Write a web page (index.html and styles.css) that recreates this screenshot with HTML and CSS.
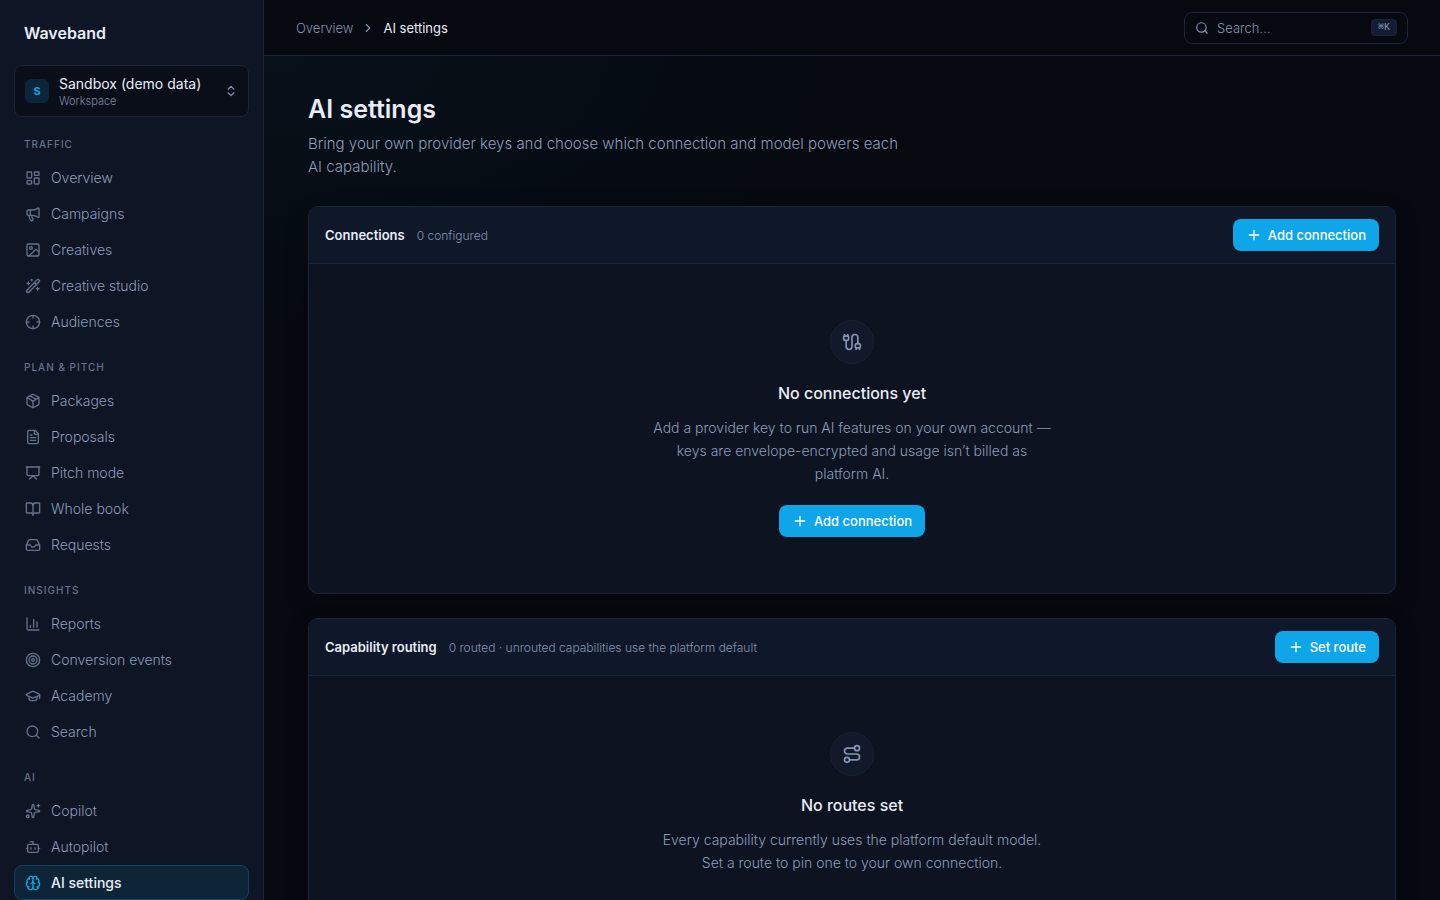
FILE: index.html
```html
<!DOCTYPE html>
<html lang="en">
<head>
    <meta charset="utf-8">
    <meta name="viewport" content="width=device-width, initial-scale=1">
    <title>AI settings - Waveband</title>
    <link rel="stylesheet" href="styles.css">
</head>
<body>
    <!-- icons -->
    <svg class="sprite" aria-hidden="true">
        <symbol id="i-dashboard" viewBox="0 0 24 24"><rect width="7" height="9" x="3" y="3" rx="1"/><rect width="7" height="5" x="14" y="3" rx="1"/><rect width="7" height="9" x="14" y="12" rx="1"/><rect width="7" height="5" x="3" y="16" rx="1"/></symbol>
        <symbol id="i-megaphone" viewBox="0 0 24 24"><path d="M11 6a13 13 0 0 0 8.4-2.8A1 1 0 0 1 21 4v12a1 1 0 0 1-1.6.8A13 13 0 0 0 11 14H5a2 2 0 0 1-2-2V8a2 2 0 0 1 2-2z"/><path d="M6 14a12 12 0 0 0 2.4 7.2 2 2 0 0 0 3.2-2.4A8 8 0 0 1 10 14"/><path d="M8 6v8"/></symbol>
        <symbol id="i-image" viewBox="0 0 24 24"><rect width="18" height="18" x="3" y="3" rx="2"/><circle cx="9" cy="9" r="2"/><path d="m21 15-3.086-3.086a2 2 0 0 0-2.828 0L6 21"/></symbol>
        <symbol id="i-wand" viewBox="0 0 24 24"><path d="m21.64 3.64-1.28-1.28a1.21 1.21 0 0 0-1.72 0L2.36 18.64a1.21 1.21 0 0 0 0 1.72l1.28 1.28a1.2 1.2 0 0 0 1.72 0L21.64 5.36a1.2 1.2 0 0 0 0-1.72"/><path d="m14 7 3 3M5 6v4M19 14v4M10 2v2M7 8H3M21 16h-4M11 3H9"/></symbol>
        <symbol id="i-crosshair" viewBox="0 0 24 24"><circle cx="12" cy="12" r="10"/><path d="M22 12h-4M6 12H2M12 6V2M12 22v-4"/></symbol>
        <symbol id="i-package" viewBox="0 0 24 24"><path d="M11 21.73a2 2 0 0 0 2 0l7-4A2 2 0 0 0 21 16V8a2 2 0 0 0-1-1.73l-7-4a2 2 0 0 0-2 0l-7 4A2 2 0 0 0 3 8v8a2 2 0 0 0 1 1.73z"/><path d="M12 22V12"/><path d="m3.3 7 7.703 4.734a2 2 0 0 0 1.994 0L20.7 7"/><path d="m7.5 4.27 9 5.15"/></symbol>
        <symbol id="i-file" viewBox="0 0 24 24"><path d="M15 2H6a2 2 0 0 0-2 2v16a2 2 0 0 0 2 2h12a2 2 0 0 0 2-2V7z"/><path d="M14 2v4a2 2 0 0 0 2 2h4"/><path d="M10 9H8M16 13H8M16 17H8"/></symbol>
        <symbol id="i-presentation" viewBox="0 0 24 24"><path d="M2 3h20"/><path d="M21 3v11a2 2 0 0 1-2 2H5a2 2 0 0 1-2-2V3"/><path d="m7 21 5-5 5 5"/></symbol>
        <symbol id="i-book" viewBox="0 0 24 24"><path d="M12 7v14"/><path d="M3 18a1 1 0 0 1-1-1V4a1 1 0 0 1 1-1h5a4 4 0 0 1 4 4 4 4 0 0 1 4-4h5a1 1 0 0 1 1 1v13a1 1 0 0 1-1 1h-6a3 3 0 0 0-3 3 3 3 0 0 0-3-3z"/></symbol>
        <symbol id="i-inbox" viewBox="0 0 24 24"><path d="M22 12h-6l-2 3h-4l-2-3H2"/><path d="M5.45 5.11 2 12v6a2 2 0 0 0 2 2h16a2 2 0 0 0 2-2v-6l-3.45-6.89A2 2 0 0 0 16.76 4H7.24a2 2 0 0 0-1.79 1.11z"/></symbol>
        <symbol id="i-chart" viewBox="0 0 24 24"><path d="M3 3v16a2 2 0 0 0 2 2h16"/><path d="M18 17V9M13 17V5M8 17v-3"/></symbol>
        <symbol id="i-target" viewBox="0 0 24 24"><circle cx="12" cy="12" r="10"/><circle cx="12" cy="12" r="6"/><circle cx="12" cy="12" r="2"/></symbol>
        <symbol id="i-cap" viewBox="0 0 24 24"><path d="M21.42 10.922a1 1 0 0 0-.019-1.838L12.83 5.18a2 2 0 0 0-1.66 0L2.6 9.08a1 1 0 0 0 0 1.832l8.57 3.908a2 2 0 0 0 1.66 0z"/><path d="M22 10v6"/><path d="M6 12.5V16a6 3 0 0 0 12 0v-3.5"/></symbol>
        <symbol id="i-search" viewBox="0 0 24 24"><circle cx="11" cy="11" r="8"/><path d="m21 21-4.34-4.34"/></symbol>
        <symbol id="i-sparkles" viewBox="0 0 24 24"><path d="M11.017 2.814a1 1 0 0 1 1.966 0l1.051 5.558a2 2 0 0 0 1.594 1.594l5.558 1.051a1 1 0 0 1 0 1.966l-5.558 1.051a2 2 0 0 0-1.594 1.594l-1.051 5.558a1 1 0 0 1-1.966 0l-1.051-5.558a2 2 0 0 0-1.594-1.594l-5.558-1.051a1 1 0 0 1 0-1.966l5.558-1.051a2 2 0 0 0 1.594-1.594z"/><path d="M20 2v4M22 4h-4"/><circle cx="4" cy="20" r="2"/></symbol>
        <symbol id="i-bot" viewBox="0 0 24 24"><path d="M12 8V4H8"/><rect width="16" height="12" x="4" y="8" rx="2"/><path d="M2 14h2M20 14h2M15 13v2M9 13v2"/></symbol>
        <symbol id="i-brain" viewBox="0 0 24 24"><path d="M12 18V5"/><path d="M15 13a4.17 4.17 0 0 1-3-4 4.17 4.17 0 0 1-3 4"/><path d="M17.598 6.5A3 3 0 1 0 12 5a3 3 0 1 0-5.598 1.5"/><path d="M17.997 5.125a4 4 0 0 1 2.526 5.77"/><path d="M18 18a4 4 0 0 0 2-7.464"/><path d="M19.967 17.483A4 4 0 1 1 12 18a4 4 0 1 1-7.967-.517"/><path d="M6 18a4 4 0 0 1-2-7.464"/><path d="M6.003 5.125a4 4 0 0 0-2.526 5.77"/></symbol>
        <symbol id="i-cable" viewBox="0 0 24 24"><path d="M17 19a1 1 0 0 1-1-1v-2a2 2 0 0 1 2-2h2a2 2 0 0 1 2 2v2a1 1 0 0 1-1 1z"/><path d="M17 21v-2"/><path d="M19 14V6.5a1 1 0 0 0-7 0v11a1 1 0 0 1-7 0V10"/><path d="M21 21v-2M3 5V3"/><path d="M4 10a2 2 0 0 1-2-2V6a1 1 0 0 1 1-1h4a1 1 0 0 1 1 1v2a2 2 0 0 1-2 2z"/><path d="M7 5V3"/></symbol>
        <symbol id="i-route" viewBox="0 0 24 24"><circle cx="6" cy="19" r="3"/><path d="M9 19h8.5a3.5 3.5 0 0 0 0-7h-11a3.5 3.5 0 0 1 0-7H15"/><circle cx="18" cy="5" r="3"/></symbol>
        <symbol id="i-updown" viewBox="0 0 24 24"><path d="m7 15 5 5 5-5M7 9l5-5 5 5"/></symbol>
        <symbol id="i-right" viewBox="0 0 24 24"><path d="m9 18 6-6-6-6"/></symbol>
        <symbol id="i-plus" viewBox="0 0 24 24"><path d="M5 12h14M12 5v14"/></symbol>
    </svg>

    <div class="app">
        <aside class="sidebar">
            <div class="brand">Waveband</div>

            <button class="workspace" type="button">
                <span class="workspace-badge">S</span>
                <span class="workspace-text">
                    <span class="workspace-name">Sandbox (demo data)</span>
                    <span class="workspace-type">Workspace</span>
                </span>
                <svg class="icon icon-sm"><use href="#i-updown"/></svg>
            </button>

            <nav class="nav">
                <div class="nav-group">
                    <h2 class="nav-label">Traffic</h2>
                    <a class="nav-item" href="#"><svg class="icon"><use href="#i-dashboard"/></svg>Overview</a>
                    <a class="nav-item" href="#"><svg class="icon"><use href="#i-megaphone"/></svg>Campaigns</a>
                    <a class="nav-item" href="#"><svg class="icon"><use href="#i-image"/></svg>Creatives</a>
                    <a class="nav-item" href="#"><svg class="icon"><use href="#i-wand"/></svg>Creative studio</a>
                    <a class="nav-item" href="#"><svg class="icon"><use href="#i-crosshair"/></svg>Audiences</a>
                </div>

                <div class="nav-group">
                    <h2 class="nav-label">Plan &amp; pitch</h2>
                    <a class="nav-item" href="#"><svg class="icon"><use href="#i-package"/></svg>Packages</a>
                    <a class="nav-item" href="#"><svg class="icon"><use href="#i-file"/></svg>Proposals</a>
                    <a class="nav-item" href="#"><svg class="icon"><use href="#i-presentation"/></svg>Pitch mode</a>
                    <a class="nav-item" href="#"><svg class="icon"><use href="#i-book"/></svg>Whole book</a>
                    <a class="nav-item" href="#"><svg class="icon"><use href="#i-inbox"/></svg>Requests</a>
                </div>

                <div class="nav-group">
                    <h2 class="nav-label">Insights</h2>
                    <a class="nav-item" href="#"><svg class="icon"><use href="#i-chart"/></svg>Reports</a>
                    <a class="nav-item" href="#"><svg class="icon"><use href="#i-target"/></svg>Conversion events</a>
                    <a class="nav-item" href="#"><svg class="icon"><use href="#i-cap"/></svg>Academy</a>
                    <a class="nav-item" href="#"><svg class="icon"><use href="#i-search"/></svg>Search</a>
                </div>

                <div class="nav-group">
                    <h2 class="nav-label">AI</h2>
                    <a class="nav-item" href="#"><svg class="icon"><use href="#i-sparkles"/></svg>Copilot</a>
                    <a class="nav-item" href="#"><svg class="icon"><use href="#i-bot"/></svg>Autopilot</a>
                    <a class="nav-item active" href="#" aria-current="page"><svg class="icon"><use href="#i-brain"/></svg>AI settings</a>
                </div>
            </nav>
        </aside>

        <div class="main">
            <header class="topbar">
                <nav class="crumbs" aria-label="Breadcrumb">
                    <a href="#">Overview</a>
                    <svg class="icon icon-sm"><use href="#i-right"/></svg>
                    <span class="crumb-current">AI settings</span>
                </nav>
                <label class="search">
                    <svg class="icon icon-sm"><use href="#i-search"/></svg>
                    <input type="text" placeholder="Search…" aria-label="Search">
                    <kbd>⌘K</kbd>
                </label>
            </header>

            <main class="content">
                <div class="page-head">
                    <h1>AI settings</h1>
                    <p>Bring your own provider keys and choose which connection and model powers each AI capability.</p>
                </div>

                <section class="card">
                    <div class="card-head">
                        <h2>Connections</h2>
                        <span class="card-note">0 configured</span>
                        <button class="btn" type="button"><svg class="icon"><use href="#i-plus"/></svg>Add connection</button>
                    </div>
                    <div class="empty">
                        <div class="empty-icon"><svg class="icon icon-lg"><use href="#i-cable"/></svg></div>
                        <h3>No connections yet</h3>
                        <p>Add a provider key to run AI features on your own account — keys are envelope-encrypted and usage isn’t billed as platform AI.</p>
                        <button class="btn" type="button"><svg class="icon"><use href="#i-plus"/></svg>Add connection</button>
                    </div>
                </section>

                <section class="card">
                    <div class="card-head">
                        <h2>Capability routing</h2>
                        <span class="card-note">0 routed · unrouted capabilities use the platform default</span>
                        <button class="btn" type="button"><svg class="icon"><use href="#i-plus"/></svg>Set route</button>
                    </div>
                    <div class="empty">
                        <div class="empty-icon"><svg class="icon icon-lg"><use href="#i-route"/></svg></div>
                        <h3>No routes set</h3>
                        <p>Every capability currently uses the platform default model. Set a route to pin one to your own connection.</p>
                    </div>
                </section>
            </main>
        </div>
    </div>
</body>
</html>
```
FILE: styles.css
```css
* {
    margin: 0;
    padding: 0;
    box-sizing: border-box;
}

body {
    background: #060910;
    color: #e8edf7;
    font-family: Inter, "Open Sans", sans-serif;
    font-size: 14px;
}

button,
input {
    font-family: inherit;
}

a {
    color: inherit;
    text-decoration: none;
}

.sprite {
    display: none;
}

.icon {
    width: 16px;
    height: 16px;
    flex-shrink: 0;
    fill: none;
    stroke: currentColor;
    stroke-width: 2;
    stroke-linecap: round;
    stroke-linejoin: round;
}

.icon-sm {
    width: 14px;
    height: 14px;
}

.icon-lg {
    width: 20px;
    height: 20px;
}

.app {
    display: flex;
    height: 100vh;
}

/* sidebar */
.sidebar {
    width: 264px;
    flex-shrink: 0;
    padding: 0 14px 14px;
    background: #0e1524;
    border-right: 1px solid #1a2538;
    overflow-y: auto;
    scrollbar-width: none;
}

.brand {
    padding: 20px 10px 19px;
    line-height: 26px;
    font-size: 16px;
    font-weight: 600;
}

.workspace {
    display: flex;
    align-items: center;
    gap: 10px;
    width: 100%;
    height: 52px;
    padding: 0 10px;
    background: #0a0e19;
    border: 1px solid #1a2538;
    border-radius: 8px;
    color: #8494b2;
    text-align: left;
}

.workspace-badge {
    width: 24px;
    height: 24px;
    border-radius: 6px;
    background: #0b2639;
    color: #0ea5e9;
    font-size: 11px;
    font-weight: 700;
    line-height: 24px;
    text-align: center;
}

.workspace-text {
    display: flex;
    flex-direction: column;
    flex: 1;
}

.workspace-name {
    color: #e8edf7;
    font-size: 14px;
    line-height: 20px;
}

.workspace-type {
    color: #7c8aa6;
    font-size: 11px;
    font-weight: 300;
    line-height: 14px;
}

.nav {
    display: flex;
    flex-direction: column;
    gap: 20px;
    margin-top: 19px;
}

.nav-group {
    display: flex;
    flex-direction: column;
    gap: 1px;
}

.nav-label {
    padding: 0 10px;
    margin-bottom: 7px;
    color: #65728c;
    font-size: 10px;
    font-weight: 500;
    line-height: 16px;
    letter-spacing: 1px;
    text-transform: uppercase;
}

.nav-item {
    display: flex;
    align-items: center;
    gap: 10px;
    height: 35px;
    padding: 0 10px;
    border: 1px solid transparent;
    border-radius: 8px;
    color: #8c9cba;
    font-weight: 300;
}

.nav-item .icon {
    color: #65728c;
}

.nav-item.active {
    background: #0e2538;
    border-color: #0d4463;
    color: #e8edf7;
    font-weight: 500;
}

.nav-item.active .icon {
    color: #0ea5e9;
}

/* main column */
.main {
    display: flex;
    flex-direction: column;
    flex: 1;
    min-width: 0;
}

.topbar {
    display: flex;
    align-items: center;
    justify-content: space-between;
    flex-shrink: 0;
    height: 56px;
    padding: 0 32px;
    border-bottom: 1px solid #1a2538;
}

.crumbs {
    display: flex;
    align-items: center;
    gap: 8px;
    color: #8494b2;
    font-size: 13px;
}

.crumbs a {
    font-weight: 300;
}

.crumb-current {
    color: #e8edf7;
}

.search {
    display: flex;
    align-items: center;
    gap: 8px;
    width: 224px;
    height: 32px;
    padding: 0 10px;
    border: 1px solid #1a2538;
    border-radius: 8px;
    color: #8494b2;
}

.search input {
    flex: 1;
    min-width: 0;
    background: none;
    border: none;
    outline: none;
    color: #e8edf7;
    font-size: 13px;
    font-weight: 300;
}

.search input::placeholder {
    color: #8494b2;
    opacity: 1;
}

.search kbd {
    padding: 0 6px;
    background: #141d33;
    border: 1px solid #1a2538;
    border-radius: 4px;
    font-family: "Liberation Mono", monospace;
    font-size: 10px;
    line-height: 15px;
}

.content {
    flex: 1;
    padding: 36px 44px;
    background: radial-gradient(ellipse 600px 280px at 0 0, #07111a, #060910);
    overflow-y: auto;
    scrollbar-width: none;
}

.page-head {
    max-width: 600px;
    margin-bottom: 28px;
}

.page-head h1 {
    margin-bottom: 6px;
    font-size: 25px;
    font-weight: 600;
    line-height: 34px;
}

.page-head p {
    color: #8c9cba;
    font-size: 15px;
    font-weight: 300;
    line-height: 23px;
}

.card {
    margin-bottom: 24px;
    background: #0d1320;
    border: 1px solid #1a2538;
    border-radius: 10px;
    box-shadow: 0 8px 24px rgba(0, 0, 0, 0.2);
    overflow: hidden;
}

.card-head {
    display: flex;
    align-items: center;
    gap: 12px;
    padding: 12px 16px;
    background: #0f1828;
    border-bottom: 1px solid #1a2538;
}

.card-head h2 {
    font-size: 13px;
    font-weight: 600;
}

.card-head .btn {
    margin-left: auto;
}

.card-note {
    color: #8494b2;
    font-size: 12px;
    font-weight: 300;
}

.btn {
    display: flex;
    align-items: center;
    gap: 6px;
    height: 32px;
    padding: 0 13px;
    background: #0ea5e9;
    border: none;
    border-radius: 8px;
    color: #fff;
    font-size: 13px;
    font-weight: 500;
}

.empty {
    display: flex;
    flex-direction: column;
    align-items: center;
    padding: 56px 24px;
    text-align: center;
}

.empty-icon {
    display: flex;
    align-items: center;
    justify-content: center;
    width: 44px;
    height: 44px;
    margin-bottom: 16px;
    background: #11192a;
    border: 1px solid #182236;
    border-radius: 50%;
    color: #8494b2;
}

.empty h3 {
    margin-bottom: 10px;
    font-size: 16px;
    font-weight: 500;
    line-height: 26px;
}

.empty p {
    max-width: 400px;
    color: #8c9cba;
    font-size: 14px;
    font-weight: 300;
    line-height: 23px;
}

.empty .btn {
    margin-top: 20px;
}
```
